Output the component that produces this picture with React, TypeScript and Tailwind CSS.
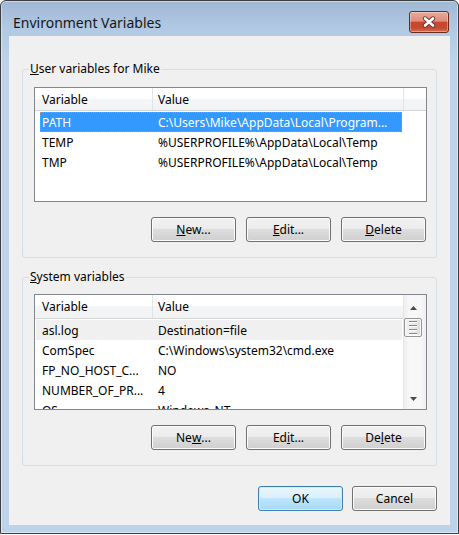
import type { ReactNode } from "react";

type Row = { name: string; value: string; state?: "selected" | "inactive" };

const userVars: Row[] = [
  { name: "PATH", value: String.raw`C:\Users\Mike\AppData\Local\Program...`, state: "selected" },
  { name: "TEMP", value: String.raw`%USERPROFILE%\AppData\Local\Temp` },
  { name: "TMP", value: String.raw`%USERPROFILE%\AppData\Local\Temp` },
];

const systemVars: Row[] = [
  { name: "asl.log", value: "Destination=file", state: "inactive" },
  { name: "ComSpec", value: String.raw`C:\Windows\system32\cmd.exe` },
  { name: "FP_NO_HOST_C...", value: "NO" },
  { name: "NUMBER_OF_PR...", value: "4" },
  { name: "OS", value: "Windows_NT" },
];

function Btn({ children, primary }: { children: ReactNode; primary?: boolean }) {
  return (
    <div
      className={`flex h-[25px] w-[85px] items-center justify-center rounded-[3px] border leading-[16px] text-black ${
        primary
          ? "border-[#3c7fb1] bg-[linear-gradient(#eaf6fd_0%,#d9f0fc_50%,#bee6fd_50%,#a7d9f5_100%)] shadow-[inset_0_0_0_1px_#d2ecfb]"
          : "border-[#707070] bg-[linear-gradient(#f2f2f2_0%,#ebebeb_50%,#dddddd_50%,#cfcfcf_100%)] shadow-[inset_0_0_0_1px_#fcfcfc]"
      }`}
    >
      {children}
    </div>
  );
}

function Header({ filler }: { filler?: boolean }) {
  return (
    <div
      className={`flex border-b border-[#d5d5d5] bg-[linear-gradient(#ffffff_0%,#ffffff_48%,#f4f5f7_50%,#f1f2f4_100%)] leading-[23px] ${
        filler ? "h-[23px]" : "h-[24px]"
      }`}
    >
      <div className="w-[118px] border-r border-[#e3e4e6] pl-[7px]">Variable</div>
      <div className={`pl-[5px] ${filler ? "w-[251px] border-r border-[#e3e4e6]" : "w-[250px]"}`}>Value</div>
      {filler && <div className="flex-1" />}
    </div>
  );
}

function ListRow({ row }: { row: Row }) {
  if (row.state === "inactive") {
    return (
      <div className="ml-[1px] flex h-[20px] w-[366px] bg-[#f0f0f0] leading-[22px]">
        <div className="w-[116px] overflow-hidden whitespace-nowrap pl-[6px]">{row.name}</div>
        <div className="w-[250px] overflow-hidden whitespace-nowrap pl-[6px]">{row.value}</div>
      </div>
    );
  }
  const sel = row.state === "selected";
  return (
    <div
      className={`ml-[5px] flex h-[20px] w-[362px] leading-[22px] ${
        sel ? "bg-[#3399ff] text-white outline-1 -outline-offset-1 outline-dotted outline-[#d0904c]" : ""
      }`}
    >
      <div className="w-[112px] overflow-hidden whitespace-nowrap pl-[2px]">{row.name}</div>
      <div className="w-[250px] overflow-hidden whitespace-nowrap pl-[6px]">{row.value}</div>
    </div>
  );
}

function Arrow({ down }: { down?: boolean }) {
  return (
    <svg width="7" height="4" viewBox="0 0 7 4">
      <path d={down ? "M0 0H7L3.5 4Z" : "M3.5 0L7 4H0Z"} fill="#4a4a4a" />
    </svg>
  );
}

function ScrollBar() {
  return (
    <div className="flex w-[23px] flex-col border-l border-[#e6e6e6] bg-[linear-gradient(90deg,#eeeeee,#f7f7f7_25%,#f7f7f7_75%,#efefef)]">
      <div className="flex h-[23px] w-[18px] items-center justify-center pt-[2px]">
        <Arrow />
      </div>
      <div className="flex h-[19px] w-[18px] flex-col items-center justify-center gap-[2px] rounded-[2px] border border-[#959595] bg-[linear-gradient(90deg,#f4f4f4,#e9e9e9_50%,#dcdcdc)] shadow-[inset_0_0_0_1px_#fafafa]">
        {[0, 1, 2, 3].map((i) => (
          <div key={i} className="h-[2px] w-[8px] border-t border-[#8a8a8a] bg-[#fdfdfd]" />
        ))}
      </div>
      <div className="mt-auto flex h-[22px] w-[18px] items-center justify-center pt-[1px]">
        <Arrow down />
      </div>
    </div>
  );
}

function Group({ label, children }: { label: ReactNode; children: ReactNode }) {
  return (
    <fieldset className="rounded-[3px] border border-[#d5dfe5] p-0">
      <legend className="ml-[6px] px-[1px] leading-[16px]">{label}</legend>
      {children}
    </fieldset>
  );
}

export default function App() {
  return (
    <div className="h-[535px] w-[459px] bg-white font-['Noto_Sans','Liberation_Sans',sans-serif] text-[12px] leading-[16px] text-black">
      <div className="flex h-[534px] w-[459px] flex-col rounded-t-[6px] border border-[#3d3d3d] bg-[linear-gradient(#9fb8d5_0px,#b2c9e3_28px,#bcd3eb_60px,#bcd3eb_100%)] px-[8px] pb-[8px] shadow-[inset_0_0_0_1px_rgba(255,255,255,0.45)]">
        {/* title bar */}
        <div className="flex h-[35px] items-start">
          <div className="pl-[4px] pt-[12px] text-[14px] leading-[20px] text-[#161616]">Environment Variables</div>
          <div className="ml-auto mr-[1px] mt-[10px] flex h-[22px] w-[40px] items-center justify-center rounded-[3px] border border-[#6b2a1e] bg-[linear-gradient(#eaa999_0%,#df8e7b_45%,#c9462e_52%,#c34a31_80%,#d57250_100%)] shadow-[inset_0_0_0_1px_rgba(255,255,255,0.35)]">
            <svg width="14" height="12" viewBox="0 0 14 12">
              <path d="M3 2.5L11 9.5M11 2.5L3 9.5" stroke="#6a3a30" strokeWidth="4.4" strokeLinecap="round" />
              <path d="M3 2.5L11 9.5M11 2.5L3 9.5" stroke="#ffffff" strokeWidth="2.6" strokeLinecap="round" />
            </svg>
          </div>
        </div>

        {/* client area */}
        <div className="flex h-[489px] flex-col bg-[#f0f0f0] px-[13px] pt-[25px]">
          <Group
            label={
              <>
                <u>U</u>ser variables for Mike
              </>
            }
          >
            <div className="pb-[15px] pl-[11px] pr-[9px] pt-[10px]">
              <div className="h-[115px] overflow-hidden border border-[#828790] bg-white">
                <Header filler />
                <div className="mt-[1px]">
                  {userVars.map((r) => (
                    <ListRow key={r.name} row={r} />
                  ))}
                </div>
              </div>
              <div className="mr-[1px] mt-[15px] flex justify-end gap-[10px]">
                <Btn>
                  <u>N</u>ew...
                </Btn>
                <Btn>
                  <u>E</u>dit...
                </Btn>
                <Btn>
                  <u>D</u>elete
                </Btn>
              </div>
            </div>
          </Group>

          <div className="mt-[11px]">
            <Group
              label={
                <>
                  <u>S</u>ystem variables
                </>
              }
            >
              <div className="pb-[15px] pl-[11px] pr-[9px] pt-[9px]">
                <div className="flex h-[116px] overflow-hidden border border-[#828790] bg-white">
                  <div className="w-[368px] overflow-hidden">
                    <Header />
                    <div className="mt-[1px]">
                      {systemVars.map((r) => (
                        <ListRow key={r.name} row={r} />
                      ))}
                    </div>
                  </div>
                  <ScrollBar />
                </div>
                <div className="mr-[1px] mt-[15px] flex justify-end gap-[10px]">
                  <Btn>
                    Ne<u>w</u>...
                  </Btn>
                  <Btn>
                    Ed<u>i</u>t...
                  </Btn>
                  <Btn>
                    De<u>l</u>ete
                  </Btn>
                </div>
              </div>
            </Group>
          </div>

          <div className="mt-[20px] flex justify-end gap-[9px]">
            <Btn primary>OK</Btn>
            <Btn>Cancel</Btn>
          </div>
        </div>
      </div>
    </div>
  );
}
